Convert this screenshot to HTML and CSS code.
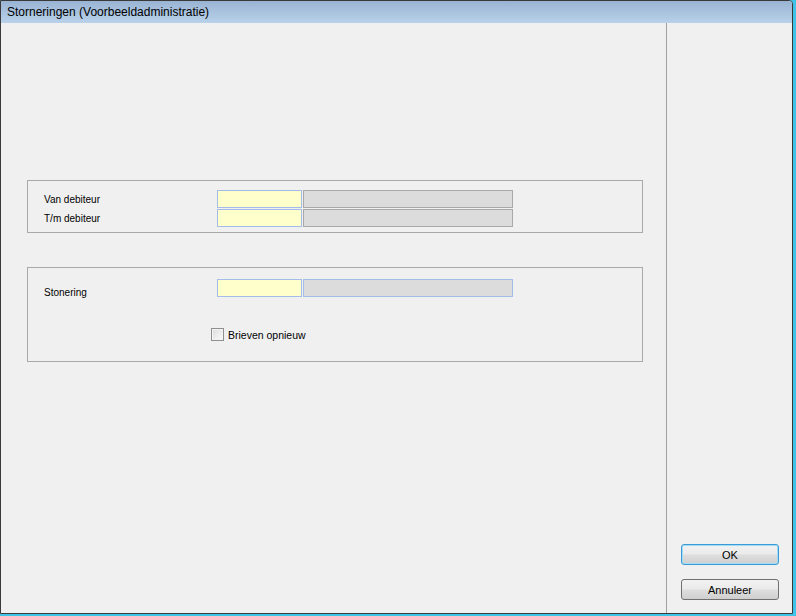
FILE: index.html
```html
<!DOCTYPE html>
<html lang="nl">
<head>
    <meta charset="UTF-8">
    <title>Storneringen (Voorbeeldadministratie)</title>
    <link rel="stylesheet" href="styles.css">
</head>
<body>
    <div class="frame">
        <div class="window">
            <div class="titlebar">Storneringen (Voorbeeldadministratie)</div>
            <div class="content">
                <div class="main">
                    <div class="group group-range">
                        <div class="row">
                            <label class="label">Van debiteur</label>
                            <input class="code" type="text">
                            <div class="name"></div>
                        </div>
                        <div class="row">
                            <label class="label">T/m debiteur</label>
                            <input class="code" type="text">
                            <div class="name"></div>
                        </div>
                    </div>

                    <div class="group group-options">
                        <div class="row">
                            <label class="label label-low">Stonering</label>
                            <input class="code" type="text">
                            <div class="name name-active"></div>
                        </div>
                        <div class="check-row">
                            <span class="checkbox"></span>
                            <span class="check-text">Brieven opnieuw</span>
                        </div>
                    </div>
                </div>
                <div class="sidebar">
                    <button class="btn btn-default">OK</button>
                    <button class="btn">Annuleer</button>
                </div>
            </div>
        </div>
    </div>
</body>
</html>
```

FILE: styles.css
```css
* {
    margin: 0;
    padding: 0;
    box-sizing: border-box;
}

body {
    width: 796px;
    height: 616px;
    overflow: hidden;
    font-family: "Liberation Sans", Arial, sans-serif;
    background: #f0f0f0;
}

.frame {
    width: 796px;
    height: 616px;
    background: #3fc3e6;
    padding: 0 3px 2px 0;
}

.window {
    height: 100%;
    display: flex;
    flex-direction: column;
    border: 1px solid #3a3a3a;
    border-top-right-radius: 4px;
    background: #f0f0f0;
}

.titlebar {
    height: 22px;
    line-height: 22px;
    padding-left: 6px;
    font-size: 12px;
    color: #000;
    background: linear-gradient(to bottom, #99b4d3, #b9d1ea);
    border-top-right-radius: 3px;
}

.content {
    flex: 1;
    display: flex;
}

.main {
    width: 665px;
    padding: 157px 0 0 26px;
    display: flex;
    flex-direction: column;
    gap: 34px;
}

.sidebar {
    flex: 1;
    border-left: 1px solid #a0a0a0;
    display: flex;
    flex-direction: column;
    justify-content: flex-end;
    gap: 14px;
    padding: 0 0 13px 14px;
}

.group {
    width: 616px;
    border: 1px solid #a9a9a9;
}

.group-range {
    padding: 9px 0 5px;
    display: flex;
    flex-direction: column;
    gap: 1px;
}

.group-options {
    padding: 11px 0 20px;
}

.row {
    display: flex;
    align-items: center;
    height: 18px;
}

.label {
    width: 189px;
    padding-left: 16px;
    font-size: 10px;
    color: #000;
}

.label-low {
    padding-top: 8px;
}

.code {
    width: 85px;
    height: 18px;
    border: 1px solid #a3bde8;
    background: #ffffcc;
    outline: none;
}

.name {
    width: 210px;
    height: 18px;
    margin-left: 1px;
    border: 1px solid #a9a9a9;
    background: #dcdcdc;
}

.name-active {
    border-color: #a3bde8;
}

.check-row {
    display: flex;
    align-items: center;
    margin: 31px 0 0 183px;
    height: 13px;
}

.checkbox {
    width: 13px;
    height: 13px;
    border: 1px solid #8e8f8f;
    background: linear-gradient(135deg, #dcdcdc, #fbfbfb);
    box-shadow: inset 0 0 0 1px #f4f4f4;
}

.check-text {
    margin-left: 4px;
    font-size: 10.5px;
    color: #000;
}

.btn {
    width: 98px;
    height: 21px;
    border: 1px solid #707070;
    border-radius: 3px;
    background: linear-gradient(to bottom, #f2f2f2 0%, #ebebeb 45%, #dddddd 55%, #cfcfcf 100%);
    font-family: "Liberation Sans", Arial, sans-serif;
    font-size: 11px;
    color: #000;
    cursor: pointer;
}

.btn-default {
    border-color: #3c9ad6;
    box-shadow: inset 0 0 0 1px #9fdcf5;
}
```
